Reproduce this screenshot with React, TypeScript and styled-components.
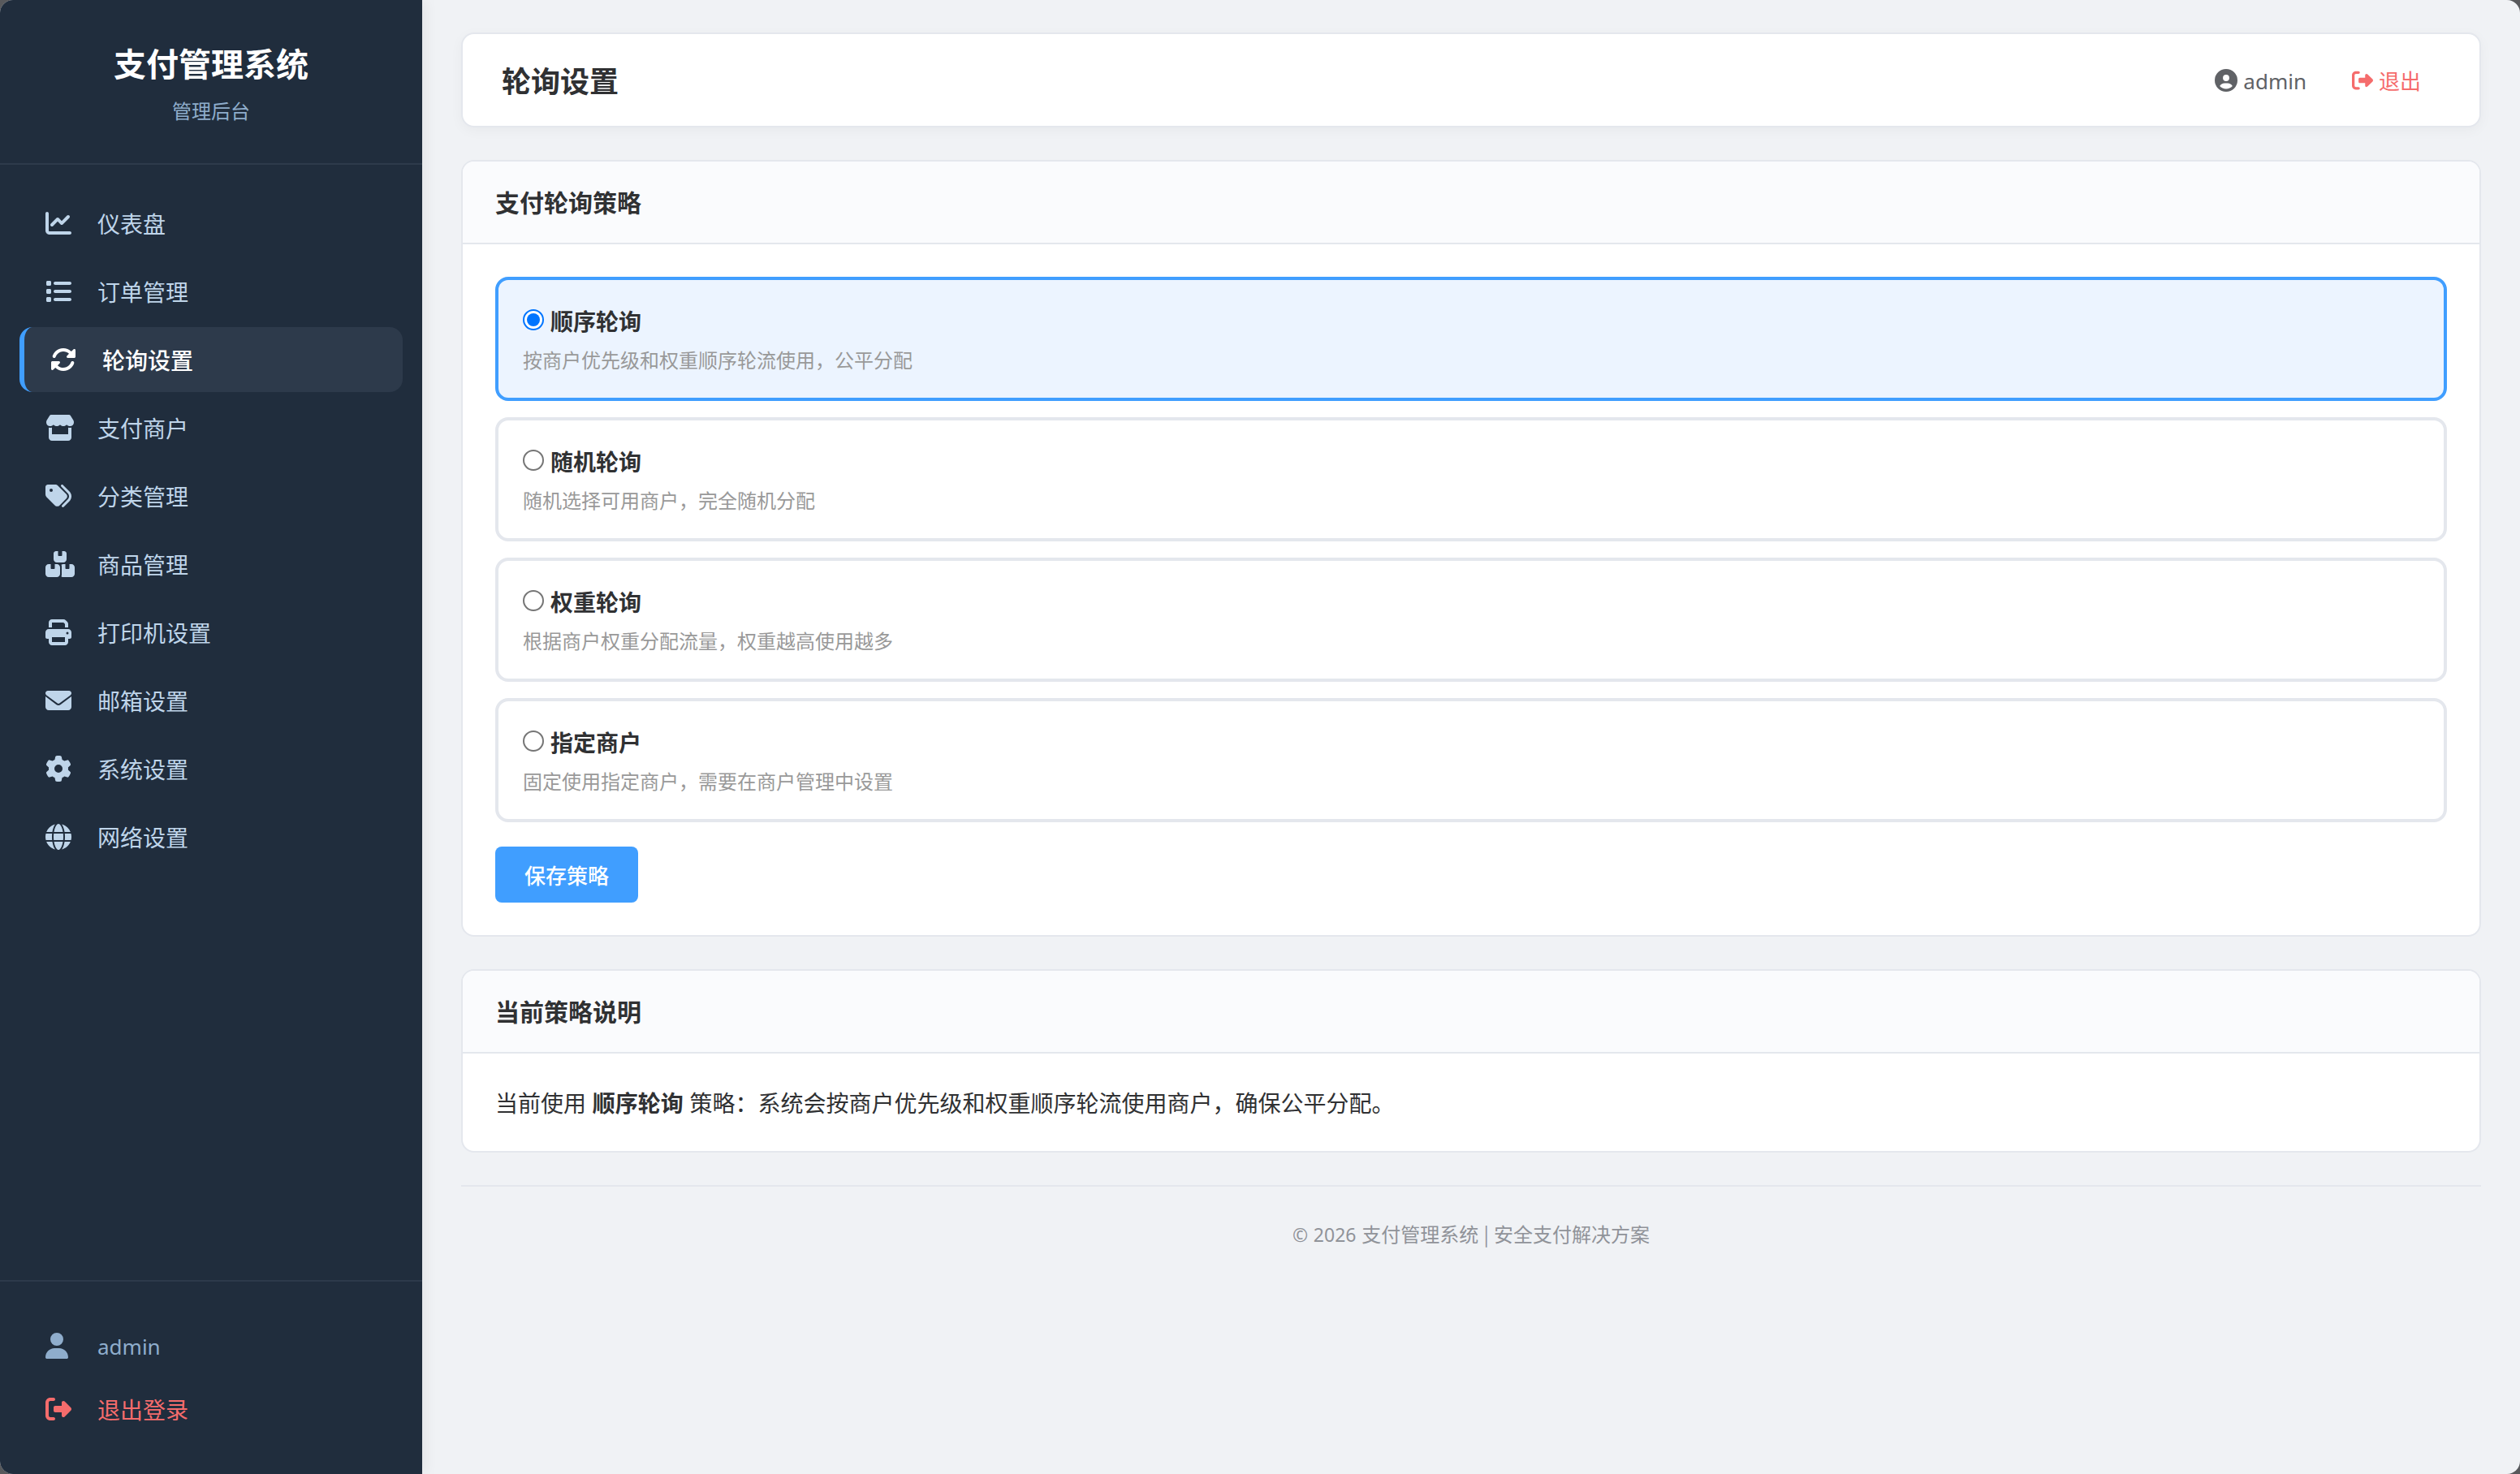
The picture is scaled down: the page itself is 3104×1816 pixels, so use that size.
import React, { useState } from "react";
import styled, { createGlobalStyle, css } from "styled-components";
import {
  FaBoxesStacked,
  FaChartLine,
  FaCircleUser,
  FaEnvelope,
  FaGear,
  FaGlobe,
  FaList,
  FaPrint,
  FaRightFromBracket,
  FaRotate,
  FaStore,
  FaTags,
  FaUser,
} from "react-icons/fa6";
import type { IconType } from "react-icons";

const GlobalStyle = createGlobalStyle`
  *, *::before, *::after { box-sizing: border-box; }
  body {
    margin: 0;
    background: #58595c;
    font-family: "Noto Sans CJK SC", "Noto Sans", sans-serif;
    color: #303133;
  }
  h1, h2, p { margin: 0; }
  a { color: inherit; text-decoration: none; }
`;

const Page = styled.div`
  display: flex;
  height: 1816px;
  border-radius: 16px;
  overflow: hidden;
  background: #f0f2f5;
`;

const Sidebar = styled.aside`
  display: flex;
  flex-direction: column;
  flex: none;
  width: 520px;
  background: #202d3d;
  box-shadow: 4px 0 16px rgba(0, 0, 0, 0.06);
  z-index: 1;
`;

const Brand = styled.div`
  height: 203px;
  padding-top: 47px;
  border-bottom: 2px solid #2d3a4b;
  text-align: center;
`;

const BrandName = styled.h1`
  font-size: 40px;
  line-height: 60px;
  font-weight: 700;
  color: #fff;
`;

const BrandSub = styled.p`
  margin-top: 12px;
  font-size: 24px;
  line-height: 34px;
  color: #8fadcc;
`;

const Nav = styled.nav`
  display: flex;
  flex-direction: column;
  gap: 4px;
  flex: 1;
  padding: 32px 24px;
`;

const NavItem = styled.a<{ $active?: boolean }>`
  display: flex;
  align-items: center;
  gap: 24px;
  height: 80px;
  padding: 0 32px;
  border-radius: 16px;
  font-size: 28px;
  line-height: 40px;
  color: #bfd5ea;
  ${(p) =>
    p.$active &&
    css`
      border-left: 6px solid #409eff;
      background: #2d3a4b;
      color: #fff;
      font-weight: 500;
    `}
`;

const IconSlot = styled.span<{ $width?: number }>`
  display: flex;
  flex: none;
  width: 40px;
  svg {
    flex: none;
    width: ${(p) => p.$width ?? 32}px;
    height: 32px;
  }
`;

const Account = styled.div`
  height: 239px;
  padding: 40px 24px;
  border-top: 2px solid #2d3a4b;
`;

const AccountRow = styled.a<{ $danger?: boolean }>`
  display: flex;
  align-items: center;
  gap: 24px;
  height: 78px;
  padding: 0 32px;
  font-size: 28px;
  line-height: 38px;
  color: ${(p) => (p.$danger ? "#f56c6c" : "#8fadcc")};
`;

const Latin = styled.span<{ $size: number }>`
  font-family: "Noto Sans", sans-serif;
  font-size: ${(p) => p.$size}px;
`;

const UserName = styled(Latin)`
  padding-top: 2px;
`;

const Main = styled.main`
  flex: 1;
  display: flex;
  flex-direction: column;
  gap: 40px;
  padding: 40px 48px;
`;

const TopBar = styled.header`
  display: flex;
  align-items: center;
  justify-content: space-between;
  height: 117px;
  padding: 0 72px 0 48px;
  border: 2px solid #e4e7ed;
  border-radius: 16px;
  background: #fff;
  box-shadow: 0 4px 16px rgba(0, 0, 0, 0.04);
`;

const PageTitle = styled.h1`
  padding-bottom: 1px;
  font-size: 36px;
  line-height: 54px;
  font-weight: 600;
`;

const TopActions = styled.div`
  display: flex;
  align-items: center;
  gap: 56px;
`;

const TopAction = styled.a<{ $danger?: boolean }>`
  display: flex;
  align-items: center;
  gap: 7px;
  font-size: ${(p) => (p.$danger ? 26 : 28)}px;
  line-height: 40px;
  color: ${(p) => (p.$danger ? "#f56c6c" : "#606266")};
  svg {
    width: 1em;
    height: 1em;
  }
`;

const Card = styled.section`
  border: 2px solid #e4e7ed;
  border-radius: 16px;
  overflow: hidden;
  background: #fff;
`;

const CardHeader = styled.div`
  display: flex;
  align-items: center;
  height: 102px;
  padding: 0 40px;
  border-bottom: 2px solid #e4e7ed;
  background: #fafbfd;
`;

const CardTitle = styled.h2`
  padding-bottom: 2px;
  font-size: 30px;
  line-height: 44px;
  font-weight: 600;
`;

const CardBody = styled.div`
  padding: 40px;
`;

const Options = styled.div`
  display: flex;
  flex-direction: column;
  gap: 20px;
`;

const Option = styled.label<{ $selected: boolean }>`
  display: block;
  height: 153px;
  padding: 30px;
  border: 4px solid ${(p) => (p.$selected ? "#409eff" : "#e4e7ed")};
  border-radius: 16px;
  background: ${(p) => (p.$selected ? "#ecf4ff" : "#fff")};
  cursor: pointer;
`;

const OptionHead = styled.div`
  display: flex;
  align-items: center;
  gap: 8px;
  height: 42px;
`;

const Radio = styled.input`
  appearance: none;
  display: grid;
  place-items: center;
  width: 26px;
  height: 26px;
  margin: 0 0 4px;
  border: 2px solid #767676;
  border-radius: 50%;
  background: #fff;
  &:checked {
    border-color: #0075ff;
  }
  &:checked::before {
    content: "";
    width: 16px;
    height: 16px;
    border-radius: 50%;
    background: #0075ff;
  }
`;

const OptionName = styled.span`
  padding-bottom: 2px;
  font-size: 28px;
  line-height: 42px;
  font-weight: 600;
`;

const OptionDesc = styled.p`
  margin-top: 8px;
  font-size: 24px;
  line-height: 36px;
  color: #999;
`;

const SaveButton = styled.button`
  display: block;
  width: 176px;
  height: 69px;
  margin-top: 30px;
  padding: 0;
  border: 0;
  border-radius: 8px;
  background: #409eff;
  color: #fff;
  font-family: inherit;
  font-size: 26px;
  line-height: 40px;
  font-weight: 500;
`;

const Explain = styled.p`
  height: 40px;
  font-size: 28px;
  line-height: 40px;
  word-spacing: 1.4px;
  strong {
    font-weight: 700;
  }
`;

const Footer = styled.footer`
  padding-top: 39px;
  border-top: 2px solid #e4e7ed;
  text-align: center;
  font-size: 24px;
  line-height: 38px;
  word-spacing: 0.8px;
  color: #909399;
`;

const navItems: { label: string; icon: IconType; width?: number; active?: boolean }[] = [
  { label: "仪表盘", icon: FaChartLine },
  { label: "订单管理", icon: FaList },
  { label: "轮询设置", icon: FaRotate, active: true },
  { label: "支付商户", icon: FaStore, width: 36 },
  { label: "分类管理", icon: FaTags },
  { label: "商品管理", icon: FaBoxesStacked, width: 36 },
  { label: "打印机设置", icon: FaPrint },
  { label: "邮箱设置", icon: FaEnvelope },
  { label: "系统设置", icon: FaGear },
  { label: "网络设置", icon: FaGlobe },
];

const strategies = [
  { id: "order", name: "顺序轮询", desc: "按商户优先级和权重顺序轮流使用，公平分配" },
  { id: "random", name: "随机轮询", desc: "随机选择可用商户，完全随机分配" },
  { id: "weight", name: "权重轮询", desc: "根据商户权重分配流量，权重越高使用越多" },
  { id: "fixed", name: "指定商户", desc: "固定使用指定商户，需要在商户管理中设置" },
];

export default function App() {
  const [selected, setSelected] = useState("order");

  return (
    <>
      <GlobalStyle />
      <Page lang="zh-CN">
        <Sidebar>
          <Brand>
            <BrandName>支付管理系统</BrandName>
            <BrandSub>管理后台</BrandSub>
          </Brand>
          <Nav>
            {navItems.map(({ label, icon: Icon, width, active }) => (
              <NavItem key={label} $active={active}>
                <IconSlot $width={width}>
                  <Icon />
                </IconSlot>
                <span>{label}</span>
              </NavItem>
            ))}
          </Nav>
          <Account>
            <AccountRow>
              <IconSlot $width={28}>
                <FaUser />
              </IconSlot>
              <UserName $size={26}>admin</UserName>
            </AccountRow>
            <AccountRow $danger>
              <IconSlot>
                <FaRightFromBracket />
              </IconSlot>
              <span>退出登录</span>
            </AccountRow>
          </Account>
        </Sidebar>
        <Main>
          <TopBar>
            <PageTitle>轮询设置</PageTitle>
            <TopActions>
              <TopAction>
                <FaCircleUser />
                <UserName $size={26}>admin</UserName>
              </TopAction>
              <TopAction $danger>
                <FaRightFromBracket />
                <span>退出</span>
              </TopAction>
            </TopActions>
          </TopBar>
          <Card>
            <CardHeader>
              <CardTitle>支付轮询策略</CardTitle>
            </CardHeader>
            <CardBody>
              <Options>
                {strategies.map((s) => (
                  <Option key={s.id} $selected={s.id === selected}>
                    <OptionHead>
                      <Radio
                        type="radio"
                        name="strategy"
                        checked={s.id === selected}
                        onChange={() => setSelected(s.id)}
                      />
                      <OptionName>{s.name}</OptionName>
                    </OptionHead>
                    <OptionDesc>{s.desc}</OptionDesc>
                  </Option>
                ))}
              </Options>
              <SaveButton type="button">保存策略</SaveButton>
            </CardBody>
          </Card>
          <Card>
            <CardHeader>
              <CardTitle>当前策略说明</CardTitle>
            </CardHeader>
            <CardBody>
              <Explain>
                当前使用 <strong>顺序轮询</strong> 策略：系统会按商户优先级和权重顺序轮流使用商户，确保公平分配。
              </Explain>
            </CardBody>
          </Card>
          <Footer>
            <Latin $size={23}>© 2026 </Latin>支付管理系统 | 安全支付解决方案
          </Footer>
        </Main>
      </Page>
    </>
  );
}
